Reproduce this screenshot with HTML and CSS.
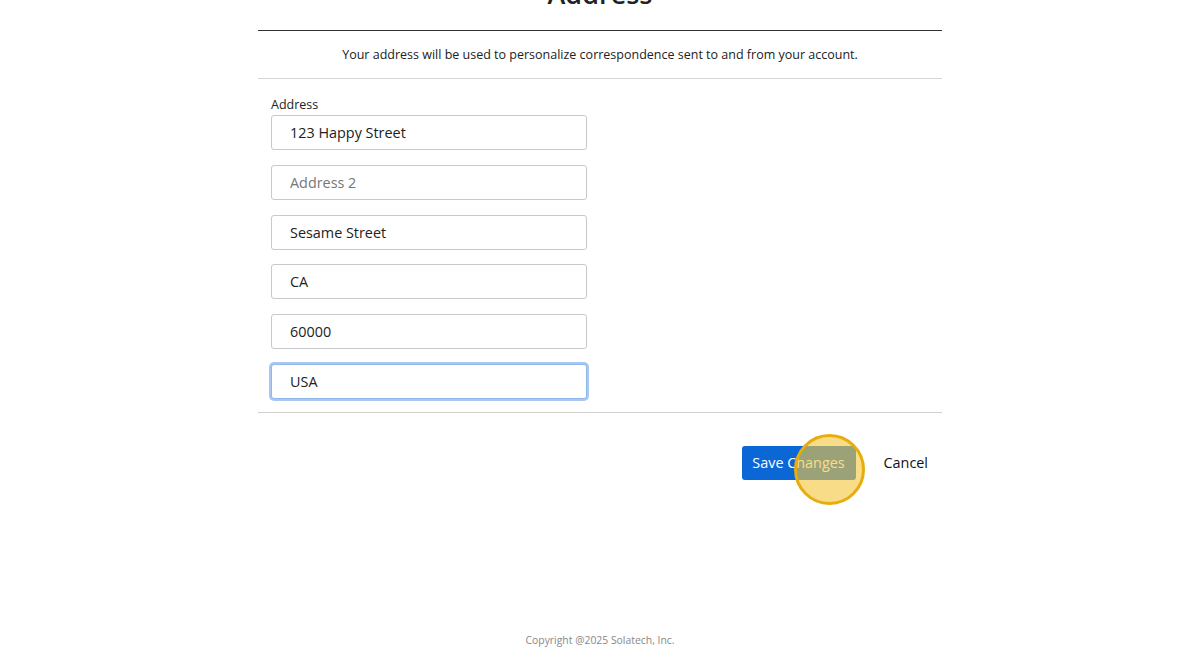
FILE: index.html
```html
<!DOCTYPE html>
<html>
<head>
<meta charset="utf-8">
<link rel="stylesheet" href="styles.css">
</head>
<body>
<div class="page">
  <main class="panel">
    <header class="panel-head">
      <h1 class="title">Address</h1>
    </header>
    <p class="intro">Your address will be used to personalize correspondence sent to and from your account.</p>
    <form class="form">
      <label class="label">Address</label>
      <div class="fields">
        <input class="field" type="text" value="123 Happy Street">
        <input class="field" type="text" placeholder="Address 2">
        <input class="field" type="text" value="Sesame Street">
        <input class="field" type="text" value="CA">
        <input class="field" type="text" value="60000">
        <input class="field field-focus" type="text" value="USA">
      </div>
    </form>
    <div class="actions">
      <button class="btn-save" type="button">Save Changes<span class="click-marker"></span></button>
      <button class="btn-cancel" type="button">Cancel</button>
    </div>
  </main>
  <footer class="footer">Copyright @2025 Solatech, Inc.</footer>
</div>
</body>
</html>
```

FILE: styles.css
```css
* { box-sizing: border-box; }
html, body { margin: 0; padding: 0; background: #fff; }
body {
  font-family: "Open Sans", "Noto Sans", sans-serif;
  color: #222;
  height: 670px;
  overflow: hidden;
}
.page {
  display: flex;
  flex-direction: column;
  align-items: center;
  height: 670px;
}
.panel {
  width: 684px;
  margin-top: -25px;
}
.panel-head {
  border-bottom: 1px solid #333;
  text-align: center;
  height: 56px;
  display: flex;
  align-items: flex-start;
  justify-content: center;
}
.title {
  margin: 0;
  font-size: 27px;
  font-weight: 600;
  line-height: 38px;
  color: #222;
}
.intro {
  margin: 0;
  height: 48px;
  line-height: 48px;
  text-align: center;
  font-size: 12.5px;
  color: #222;
  border-bottom: 1px solid #d6d6d6;
}
.form {
  padding: 16px 13px 13px;
  border-bottom: 1px solid #d0d0d0;
  display: flex;
  flex-direction: column;
}
.label {
  font-size: 12.5px;
  line-height: 20px;
  color: #222;
}
.fields {
  display: flex;
  flex-direction: column;
  gap: 14.8px;
}
.field {
  width: 316px;
  height: 35px;
  border: 1px solid #c9c9c9;
  border-radius: 3px;
  padding: 0 18px;
  font-family: inherit;
  font-size: 14.4px;
  color: #222;
  outline: none;
  background: #fff;
}
.field::placeholder { color: #777; }
.field-focus {
  border: 1px solid #8fb7ec;
  box-shadow: 0 0 0 2px #a9c8f1;
}
.actions {
  display: flex;
  justify-content: flex-end;
  align-items: center;
  gap: 28px;
  padding: 33px 14px 0 0;
}
.btn-save {
  position: relative;
  height: 34px;
  width: 114px;
  border: none;
  border-radius: 3px;
  background: #0b66d6;
  color: #fff;
  font-family: inherit;
  font-size: 14.4px;
  padding: 0;
  cursor: pointer;
}
.click-marker {
  position: absolute;
  left: 52px;
  top: -12px;
  width: 71px;
  height: 71px;
  border-radius: 50%;
  border: 3px solid #e7ad0e;
  background: rgba(246, 199, 63, 0.62);
}
.btn-cancel {
  border: none;
  background: none;
  font-family: inherit;
  font-size: 14.4px;
  color: #111;
  padding: 0;
}
.footer {
  margin-top: auto;
  margin-bottom: 23px;
  font-size: 10.4px;
  color: #888;
}
```
